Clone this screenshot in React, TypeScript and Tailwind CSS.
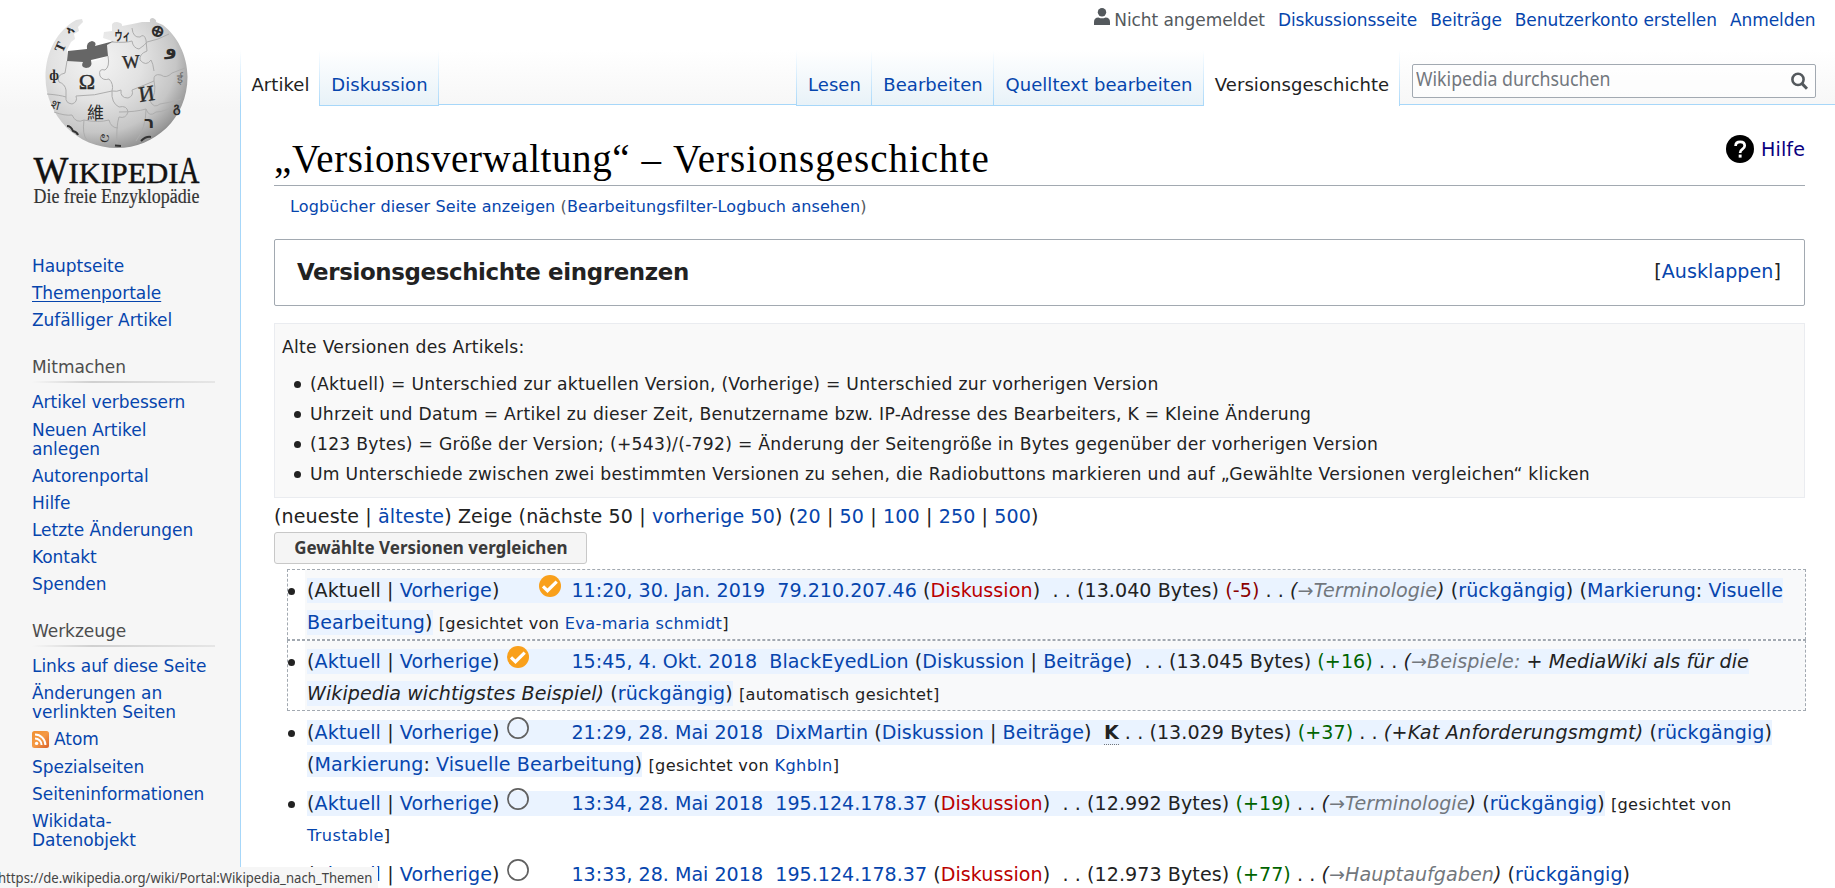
import type { ReactNode } from "react";

function A({ children, className = "" }: { children: ReactNode; className?: string }) {
  return (
    <a href="#" className={`text-[#0645ad] ${className}`}>
      {children}
    </a>
  );
}

function Globe() {
  return (
    <svg width="184" height="204" viewBox="24 12 184 204" className="block">
      <defs>
        <radialGradient id="ball" cx="0.36" cy="0.32" r="0.8">
          <stop offset="0" stopColor="#f4f4f4" />
          <stop offset="0.4" stopColor="#e2e2e2" />
          <stop offset="0.7" stopColor="#c6c6c6" />
          <stop offset="0.88" stopColor="#979797" />
          <stop offset="1" stopColor="#5c5c5c" />
        </radialGradient>
      </defs>
      <path
        d="M76 20 L82 19 L83 22 L78 27 L79 31 L74 34 L75 39 L71 42 L67 50 L67 61 Q75 61 83 62 Q81 67 87 68 Q93 67 90 62 Q99 60 108 56 L107 44 L112 41 L103 38 L104 32 L112 31 L112 27 Q111 22 117 22 Q123 23 122 26 Q133 24 142 22 L150 22 Q149 18 153 18 Q157 20 156 22 L163 25 C177 36 187.500 55 187.500 77 C187.500 118 155 148 117 148 C77 148 45.500 116 45.500 77 C45.500 51 58 30 76 20Z"
        fill="url(#ball)"
      />
      <path
        d="M68 51 L87 49 Q86 42 92 41 Q97 42 95 46 L114 41 L107 45 L108 56 L91 60 Q93 68 86 68 Q80 67 83 62 L67 61Z"
        fill="#666"
      />
      <g fill="none" stroke="#adadad" strokeWidth="1">
        <path d="M108 56 Q110 67 105 70 Q98 68 100 76 Q103 81 109 79 Q114 84 112 91 Q117 92 121 90 Q120 98 128 98 Q134 96 132 90 Q145 85 154 81 Q153 73 161 75 Q166 79 172 73 Q180 70 185 68" />
        <path d="M47 94 Q60 95 66 97 Q65 103 72 104 Q78 102 76 96 Q95 96 112 91 Q111 103 119 107 Q127 105 128 112 Q126 119 119 117 Q116 126 117 146" />
        <path d="M67 61 L65 73 Q56 75 59 82 Q65 84 66 90 L66 97" />
        <path d="M132 28 Q133 38 140 37 Q144 33 146 40 L147 51 Q139 54 140 60 Q146 67 151 60 Q153 63 154 71" />
        <path d="M112 42 Q126 43 132 41 Q133 48 139 49 Q145 45 147 42 Q158 40 169 34" />
        <path d="M154 81 Q157 94 150 101 Q154 109 160 104 Q169 103 181 99 M119 112 Q136 112 146 109 Q149 118 156 112 Q166 112 176 104" />
        <path d="M54 112 Q65 116 72 115 Q76 124 84 120 Q98 123 109 120 Q111 128 118 128 M84 120 Q82 135 87 140 M146 109 Q146 128 136 141" />
      </g>
      <g fill="#2b2b2b" fontFamily="'Liberation Serif', serif" textAnchor="middle">
        <text x="87" y="88.5" fontSize="22" stroke="#2b2b2b" strokeWidth="0.4">Ω</text>
        <text x="131" y="68" fontSize="18.5" stroke="#2b2b2b" strokeWidth="0.4" transform="rotate(-4 131 62)">W</text>
        <text x="146.500" y="101" fontSize="22" stroke="#2b2b2b" strokeWidth="0.4" transform="rotate(-8 146 93)">И</text>
        <text x="95.500" y="118.500" fontSize="17" fontFamily="'Noto Sans CJK TC', sans-serif">維</text>
        <text x="149" y="127.500" fontSize="17" fontWeight="bold" fontFamily="'DejaVu Sans', sans-serif">ר</text>
        <text x="122.500" y="40" fontSize="13" fontWeight="bold" fontFamily="'Noto Sans CJK JP', sans-serif" textLength="16" lengthAdjust="spacingAndGlyphs">ウィ</text>
        <text x="171" y="55" fontSize="19" fontWeight="bold" fontFamily="'DejaVu Sans', sans-serif">و</text>
        <text x="60" y="52" fontSize="14" fontWeight="bold" transform="rotate(-65 60 47)">T</text>
        <text x="157" y="36" fontSize="14" fontWeight="bold" transform="rotate(20 157 31)">ⴲ</text>
        <text x="54" y="80" fontSize="14" fontWeight="bold">ф</text>
        <text x="56" y="109" fontSize="13" transform="rotate(15 56 103)">श</text>
        <text x="180" y="83" fontSize="12" fill="#666">ई</text>
        <text x="105" y="142" fontSize="15" transform="rotate(12 105 137)">ಲ</text>
        <text x="177" y="112" fontSize="13" fontWeight="bold">გ</text>
        <text x="70" y="34" fontSize="12" fontWeight="bold" transform="rotate(-30 70 30)">ኣ</text>
      </g>
      <path d="M67 126 Q71 126 73 131 Q77 132 78 135 M141 141 Q146 136 151 137 M115 145.500 L121 146" stroke="#333" strokeWidth="2" fill="none" />
      <g fill="#111" stroke="#111" strokeWidth="0.4" fontFamily="'Liberation Serif', serif">
        <text x="33.500" y="182.800" fontSize="37">W</text>
        <text x="68.500" y="182.800" fontSize="28.500" textLength="110" lengthAdjust="spacingAndGlyphs">IKIPEDI</text>
        <text x="178.500" y="182.800" fontSize="37" textLength="21" lengthAdjust="spacingAndGlyphs">A</text>
      </g>
      <text x="33.500" y="203.300" fontSize="20" fill="#333" stroke="#333" strokeWidth="0.2" fontFamily="'Liberation Serif', serif" textLength="166" lengthAdjust="spacingAndGlyphs">
        Die freie Enzyklopädie
      </text>
    </svg>
  );
}

function NavItem({ children }: { children: ReactNode }) {
  return <li className="py-[4.1px] leading-[18.93px]">{children}</li>;
}

function Portal({ title, children }: { title: string; children: ReactNode }) {
  return (
    <div>
      <h3 className="h-[24.5px] leading-[21px] text-[#4d4d4d]">{title}</h3>
      <div className="h-[2px] w-[183px] bg-linear-to-r from-[#f6f6f6] via-[#d0d0d0] via-33% to-[#e6e6e6]" />
      <ul className="mt-[6px]">{children}</ul>
    </div>
  );
}

function Sidebar() {
  return (
    <aside className="w-[240px] shrink-0 pl-[32px] pt-[12px]">
      <div className="-ml-[8px] h-[240.5px]">
        <Globe />
      </div>
      <nav className="whitespace-nowrap text-[17px] tracking-[-0.05px]">
        <ul className="mb-[23px]">
          <NavItem><A>Hauptseite</A></NavItem>
          <NavItem><A className="underline underline-offset-[2px]">Themenportale</A></NavItem>
          <NavItem><A>Zufälliger Artikel</A></NavItem>
        </ul>
        <Portal title="Mitmachen">
          <NavItem><A>Artikel verbessern</A></NavItem>
          <NavItem><A>Neuen Artikel<br />anlegen</A></NavItem>
          <NavItem><A>Autorenportal</A></NavItem>
          <NavItem><A>Hilfe</A></NavItem>
          <NavItem><A>Letzte Änderungen</A></NavItem>
          <NavItem><A>Kontakt</A></NavItem>
          <NavItem><A>Spenden</A></NavItem>
        </Portal>
        <div className="h-[22.5px]" />
        <Portal title="Werkzeuge">
          <NavItem><A>Links auf diese Seite</A></NavItem>
          <NavItem><A>Änderungen an<br />verlinkten Seiten</A></NavItem>
          <NavItem>
            <A className="flex items-center gap-[5px]">
              <svg width="17" height="17" viewBox="0 0 17 17">
                <defs>
                  <linearGradient id="feed" x1="0" y1="0" x2="1" y2="1">
                    <stop offset="0" stopColor="#f09030" />
                    <stop offset="0.5" stopColor="#f59a45" />
                    <stop offset="1" stopColor="#d9602a" />
                  </linearGradient>
                </defs>
                <rect width="17" height="17" rx="2.5" fill="url(#feed)" />
                <circle cx="4.6" cy="12.4" r="1.7" fill="#fff" />
                <path d="M3 7.4 a6.6 6.6 0 0 1 6.6 6.6 M3 3.6 a10.4 10.4 0 0 1 10.4 10.4" stroke="#fff" strokeWidth="2" fill="none" />
              </svg>
              Atom
            </A>
          </NavItem>
          <NavItem><A>Spezialseiten</A></NavItem>
          <NavItem><A>Seiteninformationen</A></NavItem>
          <NavItem><A>Wikidata-<br />Datenobjekt</A></NavItem>
        </Portal>
      </nav>
    </aside>
  );
}

function Divider() {
  return <div className="h-[56px] w-px shrink-0 bg-linear-to-b from-white to-[#a7d7f9]" />;
}

function Tab({ label, width, active = false }: { label: string; width: string; active?: boolean }) {
  const base = "h-[56px] shrink-0 pl-px pt-[25px] text-center text-[18px] leading-[20px] tracking-[0.06px] whitespace-nowrap";
  return active ? (
    <div className={`${base} ${width} bg-white text-[#222]`}>{label}</div>
  ) : (
    <div className={`${base} ${width} border-b border-[#a7d7f9] bg-linear-to-b from-white to-[#e8f2f8]`}>
      <A>{label}</A>
    </div>
  );
}

function Header() {
  return (
    <header className="relative z-10 -mb-px h-[106px]">
      <div className="flex h-[50px] items-start justify-end gap-[13px] whitespace-nowrap pr-[19.5px] pt-[8px] text-[17px] leading-[24px] tracking-[-0.07px]">
        <span className="flex text-[#54595d]">
          <svg width="16" height="17" viewBox="0 0 16 17" className="mr-[4px]" fill="#54595d">
            <circle cx="8" cy="4.2" r="4.2" />
            <path d="M0 17 V14 Q0 9.5 4.5 9.5 Q8 11.2 11.5 9.5 Q16 9.5 16 14 V17Z" />
          </svg>
          Nicht angemeldet
        </span>
        <A>Diskussionsseite</A>
        <A>Beiträge</A>
        <A>Benutzerkonto erstellen</A>
        <A>Anmelden</A>
      </div>
      <div className="flex h-[56px]">
        <Divider />
        <Tab label="Artikel" width="w-[78px]" active />
        <Divider />
        <Tab label="Diskussion" width="w-[118px]" />
        <Divider />
        <div className="mb-px grow border-b border-[#a7d7f9]" />
        <Divider />
        <Tab label="Lesen" width="w-[74px]" />
        <Divider />
        <Tab label="Bearbeiten" width="w-[121px]" />
        <Divider />
        <Tab label="Quelltext bearbeiten" width="w-[209px]" />
        <Divider />
        <Tab label="Versionsgeschichte" width="w-[195px]" active />
        <Divider />
        <div className="mb-px w-[435px] border-b border-[#a7d7f9] pl-[12px] pt-[14px]">
          <div className="flex h-[34px] w-[404px] items-center justify-between rounded-[2px] border border-[#a2a9b1] bg-white/60 pl-[3px] pr-[7px]">
            <span className="mb-[4px] w-[200px] origin-left scale-x-[0.91] whitespace-nowrap font-['Noto_Sans'] text-[19.5px] leading-[28px] text-[#72777d]">
              Wikipedia durchsuchen
            </span>
            <svg width="17" height="18" viewBox="0 0 17 18" fill="none" stroke="#54595d">
              <circle cx="7" cy="7.4" r="5.6" strokeWidth="2.6" />
              <path d="M11 11.6 L16 16.8" strokeWidth="3" />
            </svg>
          </div>
        </div>
      </div>
    </header>
  );
}

type Mark = "first" | "second" | "open";

function Radio({ mark }: { mark: Mark }) {
  return (
    <span
      className={`relative -top-[6px] -my-[3px] inline-flex h-[24px] w-[72px] items-center align-middle ${
        mark === "first" ? "pl-[40px]" : "pl-[7.5px]"
      }`}
    >
      <svg width="22" height="22" viewBox="0 0 22 22">
        {mark === "open" ? (
          <circle cx="11" cy="11" r="10.1" fill="none" stroke="#606060" strokeWidth="1.7" />
        ) : (
          <>
            <circle cx="11" cy="11" r="11" fill="#f9a01b" />
            <path d="M4 11.400 L8.500 15.700 L17.700 6.700" fill="none" stroke="#fff" strokeWidth="3.200" />
          </>
        )}
      </svg>
    </span>
  );
}

function Row({ selected = false, children }: { selected?: boolean; children: ReactNode }) {
  return (
    <li className={`flex h-[71px] border border-dashed ${selected ? "border-[#a2a9b1]" : "border-transparent"}`}>
      <span className="flex w-[17px] shrink-0 pt-[18px]">
        <span className="h-[7px] w-[7px] rounded-full bg-[#222]" />
      </span>
      <div className={`grow whitespace-nowrap pl-[2px] pt-[5px] leading-[31.5px] ${selected ? "bg-[#f8f9fa]" : ""}`}>
        {children}
      </div>
    </li>
  );
}

function Hl({ children }: { children: ReactNode }) {
  return <span className="bg-[#eaf3ff] py-px">{children}</span>;
}

function Small({ children }: { children: ReactNode }) {
  return <span className="text-[16.2px] tracking-[0.32px]">{children}</span>;
}

const Stamp = ({ children }: { children: ReactNode }) => <A className="tracking-normal">{children}</A>;
const Red = ({ children }: { children: ReactNode }) => <a href="#" className="text-[#ba0000]">{children}</a>;
const Plus = ({ children }: { children: ReactNode }) => <span className="text-[#006400]">{children}</span>;
const Section = ({ children }: { children: ReactNode }) => <span className="text-[#72777d]">{children}</span>;

export default function App() {
  return (
    <div className="relative h-[888px] w-[1835px] overflow-hidden bg-[#f6f6f6] font-['DejaVu_Sans',sans-serif] text-[19.09px] text-[#222]">
      <div className="flex h-[888px] bg-[linear-gradient(to_bottom,#fff_0,#fff_50px,#f6f6f6_109px)]">
        <Sidebar />
        <div className="w-[1595px] shrink-0">
          <Header />
          <main className="h-[800px] border-l border-[#a7d7f9] bg-white pl-[33px] pr-[30px]">
            <div className="flex h-[81px] items-start justify-between border-b border-[#a2a9b1]">
              <h1 className="whitespace-nowrap pt-[29px] font-['Liberation_Serif'] text-[39px] leading-[50px] tracking-[0.59px] text-black">
                „Versionsverwaltung“ <span className="mx-px">–</span> <span className="tracking-[0.99px]">Versionsgeschichte</span>
              </h1>
              <a href="#" className="flex items-center gap-[7px] pt-[30px] leading-[30px] tracking-[0.1px] text-[#0b0080]">
                <svg width="28" height="28" viewBox="0 0 28 28" className="mb-[2px]">
                  <circle cx="14" cy="14" r="14" />
                  <path d="M9.6 11 Q9.6 6.900 14.200 6.900 Q18.700 6.900 18.700 10.700 Q18.700 12.700 16.200 14.400 Q14.100 15.800 14.100 18" fill="none" stroke="#fff" strokeWidth="2.7" />
                  <rect x="12.7" y="19.6" width="2.9" height="3" fill="#fff" />
                </svg>
                Hilfe
              </a>
            </div>
            <div className="pl-[16px] pt-[9px] text-[16.04px] leading-[24px] tracking-[0.09px] text-[#54595d]">
              <A>Logbücher dieser Seite anzeigen</A> (<A>Bearbeitungsfilter-Logbuch ansehen</A>)
            </div>
            <div className="mt-[20px] flex h-[67px] items-center justify-between rounded-[2px] border border-[#a2a9b1] pl-[22px] pr-[23px]">
              <h2 className="text-[22.9px] font-bold tracking-[-0.36px]">Versionsgeschichte eingrenzen</h2>
              <span className="tracking-[0.06px]">[<A>Ausklappen</A>]</span>
            </div>
            <div className="mt-[17px] h-[175px] border border-[#eaecf0] bg-[#f9f9f9] pl-[7px] pt-[8px] text-[17.18px] leading-[30px] tracking-[0.275px]">
              <p>Alte Versionen des Artikels:</p>
              <ul className="mt-[7px]">
                {[
                  "(Aktuell) = Unterschied zur aktuellen Version, (Vorherige) = Unterschied zur vorherigen Version",
                  "Uhrzeit und Datum = Artikel zu dieser Zeit, Benutzername bzw. IP-Adresse des Bearbeiters, K = Kleine Änderung",
                  "(123 Bytes) = Größe der Version; (+543)/(-792) = Änderung der Seitengröße in Bytes gegenüber der vorherigen Version",
                  "Um Unterschiede zwischen zwei bestimmten Versionen zu sehen, die Radiobuttons markieren und auf „Gewählte Versionen vergleichen“ klicken",
                ].map((text) => (
                  <li key={text} className="flex items-center gap-[9px] whitespace-nowrap pl-[12px]">
                    <span className="h-[7px] w-[7px] rounded-full bg-[#222]" />
                    {text}
                  </li>
                ))}
              </ul>
            </div>
            <p className="h-[33px] pt-[4px] leading-[29px] tracking-[0.11px]">
              (neueste | <A>älteste</A>) Zeige (nächste 50 | <A>vorherige 50</A>) (<A>20</A> | <A>50</A> | <A>100</A> |{" "}
              <A>250</A> | <A>500</A>)
            </p>
            <button className="mt-px flex h-[32px] w-[313px] items-center justify-center rounded-[3px] border border-[#c8c8c8] bg-[#f5f5f5]">
              <span className="mb-[2px] scale-x-[0.918] whitespace-nowrap font-['Noto_Sans'] text-[18.5px] font-bold leading-[28px] text-[#3a3a3a]">
                Gewählte Versionen vergleichen
              </span>
            </button>
            <ul className="-mr-px ml-[13px] mt-[5px] tracking-[0.066px]">
              <Row selected>
                <Hl>
                  (Aktuell | <A>Vorherige</A>)<Radio mark="first" />
                  <Stamp>11:20, 30. Jan. 2019</Stamp>&nbsp; <Stamp>79.210.207.46</Stamp> (<Red>Diskussion</Red>)&nbsp; . . (13.040 Bytes){" "}
                  <span className="text-[#8b0000]">(-5)</span> . . <i>(<Section>→Terminologie</Section>)</i> (<A>rückgängig</A>) (
                  <A>Markierung</A>: <A>Visuelle</A>
                  <br />
                  <A>Bearbeitung</A>)
                </Hl>{" "}
                <Small>[gesichtet von <A>Eva-maria schmidt</A>]</Small>
              </Row>
              <Row selected>
                <Hl>
                  (<A>Aktuell</A> | <A>Vorherige</A>)<Radio mark="second" />
                  <Stamp>15:45, 4. Okt. 2018</Stamp>&nbsp; <A>BlackEyedLion</A> (<A>Diskussion</A> | <A>Beiträge</A>)&nbsp; . . (13.045
                  Bytes) <Plus>(+16)</Plus> . . <i>(<Section>→Beispiele:</Section>&nbsp;+ MediaWiki als für die</i>
                  <br />
                  <i>Wikipedia wichtigstes Beispiel)</i> (<A>rückgängig</A>)
                </Hl>{" "}
                <Small>[automatisch gesichtet]</Small>
              </Row>
              <Row>
                <Hl>
                  (<A>Aktuell</A> | <A>Vorherige</A>)<Radio mark="open" />
                  <Stamp>21:29, 28. Mai 2018</Stamp>&nbsp; <A>DixMartin</A> (<A>Diskussion</A> | <A>Beiträge</A>)&nbsp;{" "}
                  <b className="border-b border-dotted border-[#72777d]">K</b> . . (13.029 Bytes) <Plus>(+37)</Plus> . .{" "}
                  <i className="tracking-[0.24px]">(+Kat Anforderungsmgmt)</i> (<A>rückgängig</A>)
                  <br />(<A>Markierung</A>: <A>Visuelle Bearbeitung</A>)
                </Hl>{" "}
                <Small>[gesichtet von <A>Kghbln</A>]</Small>
              </Row>
              <Row>
                <Hl>
                  (<A>Aktuell</A> | <A>Vorherige</A>)<Radio mark="open" />
                  <Stamp>13:34, 28. Mai 2018</Stamp>&nbsp; <Stamp>195.124.178.37</Stamp> (<Red>Diskussion</Red>)&nbsp; . . (12.992 Bytes){" "}
                  <Plus>(+19)</Plus> . . <i>(<Section>→Terminologie</Section>)</i> (<A>rückgängig</A>)
                </Hl>{" "}
                <Small>
                  [gesichtet von
                  <br />
                  <span className="relative -top-[2px]"><A>Trustable</A>]</span>
                </Small>
              </Row>
              <Row>
                (<A>Aktuell</A> | <A>Vorherige</A>)<Radio mark="open" />
                <Stamp>13:33, 28. Mai 2018</Stamp>&nbsp; <Stamp>195.124.178.37</Stamp> (<Red>Diskussion</Red>)&nbsp; . . (12.973 Bytes){" "}
                <Plus>(+77)</Plus> . . <i>(<Section>→Hauptaufgaben</Section>)</i> (<A>rückgängig</A>)
              </Row>
            </ul>
          </main>
        </div>
      </div>
      <div className="absolute bottom-0 left-0 z-20 h-[21px] w-[378px] overflow-hidden bg-[#f6f6f6]">
        <span className="-ml-[2px] block w-[440px] origin-left scale-x-[0.9] whitespace-nowrap font-['Noto_Sans'] text-[14.6px] leading-[20px] text-[#444]">
          https://de.wikipedia.org/wiki/Portal:Wikipedia_nach_Themen
        </span>
      </div>
    </div>
  );
}
